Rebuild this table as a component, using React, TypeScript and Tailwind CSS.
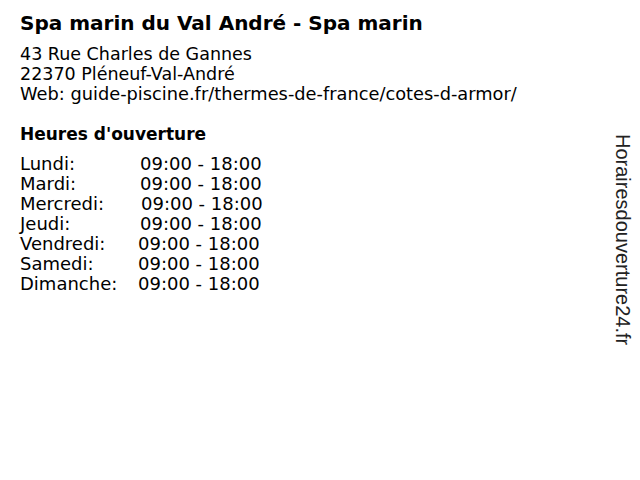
const HOURS: [string, string, number][] = [
  ["Lundi:", "09:00 - 18:00", 120],
  ["Mardi:", "09:00 - 18:00", 120],
  ["Mercredi:", "09:00 - 18:00", 121],
  ["Jeudi:", "09:00 - 18:00", 120],
  ["Vendredi:", "09:00 - 18:00", 118],
  ["Samedi:", "09:00 - 18:00", 118],
  ["Dimanche:", "09:00 - 18:00", 118],
];

const labelWidth: Record<number, string> = {
  118: "w-[118px]",
  120: "w-[120px]",
  121: "w-[121px]",
};

export default function App() {
  return (
    <div className="relative flex h-[480px] w-[640px] bg-white font-['DejaVu_Sans',sans-serif] text-black">
      <div className="flex flex-col pl-5 pt-[11px]">
        <h1 className="whitespace-nowrap text-[20px] font-bold leading-[24px]">Spa marin du Val André - Spa marin</h1>
        <div className="mt-[9px] whitespace-nowrap text-[17.5px] leading-[20px]">
          <p>43 Rue Charles de Gannes</p>
          <p>22370 Pléneuf-Val-André</p>
          <p className="text-[17.8px]">Web: guide-piscine.fr/thermes-de-france/cotes-d-armor/</p>
        </div>
        <h2 className="mt-[20px] text-[17px] font-bold leading-[20px]">Heures d'ouverture</h2>
        <div className="mt-[10px] whitespace-nowrap text-[18px] leading-[20px]">
          {HOURS.map(([day, time, w]) => (
            <div key={day} className="flex">
              <span className={labelWidth[w]}>{day}</span>
              <span>{time}</span>
            </div>
          ))}
        </div>
      </div>
      <div className="absolute right-[7px] top-[134px] whitespace-nowrap font-['Liberation_Sans',sans-serif] text-[20px] leading-[20px] text-[#222] [writing-mode:vertical-rl]">
        Horairesdouverture24.fr
      </div>
    </div>
  );
}
